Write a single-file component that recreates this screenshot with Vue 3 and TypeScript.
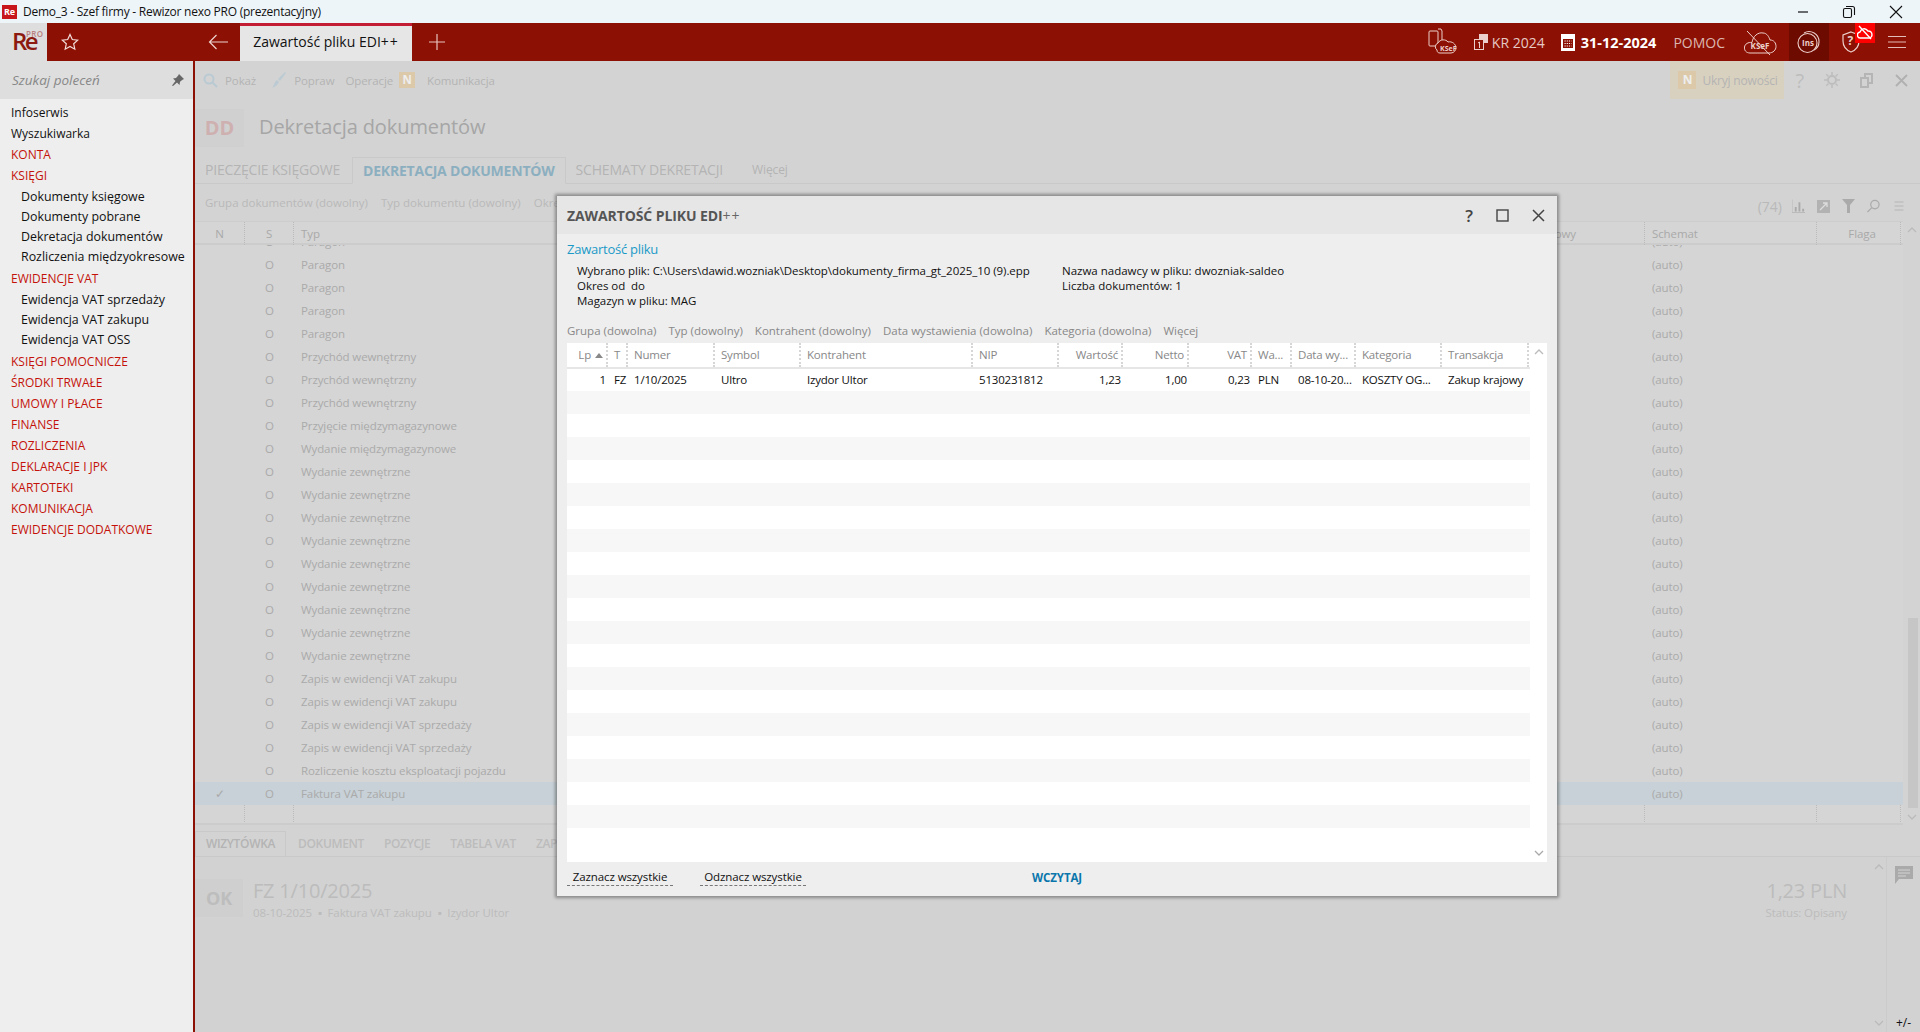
<script setup lang="ts">
interface Item {
  label: string
  kind: 'plain' | 'head' | 'sub'
}

const menu: Item[] = [
  { label: 'Infoserwis', kind: 'plain' },
  { label: 'Wyszukiwarka', kind: 'plain' },
  { label: 'KONTA', kind: 'head' },
  { label: 'KSIĘGI', kind: 'head' },
  { label: 'Dokumenty księgowe', kind: 'sub' },
  { label: 'Dokumenty pobrane', kind: 'sub' },
  { label: 'Dekretacja dokumentów', kind: 'sub' },
  { label: 'Rozliczenia międzyokresowe', kind: 'sub' },
  { label: 'EWIDENCJE VAT', kind: 'head' },
  { label: 'Ewidencja VAT sprzedaży', kind: 'sub' },
  { label: 'Ewidencja VAT zakupu', kind: 'sub' },
  { label: 'Ewidencja VAT OSS', kind: 'sub' },
  { label: 'KSIĘGI POMOCNICZE', kind: 'head' },
  { label: 'ŚRODKI TRWAŁE', kind: 'head' },
  { label: 'UMOWY I PŁACE', kind: 'head' },
  { label: 'FINANSE', kind: 'head' },
  { label: 'ROZLICZENIA', kind: 'head' },
  { label: 'DEKLARACJE I JPK', kind: 'head' },
  { label: 'KARTOTEKI', kind: 'head' },
  { label: 'KOMUNIKACJA', kind: 'head' },
  { label: 'EWIDENCJE DODATKOWE', kind: 'head' },
]

const repeat = (label: string, n: number) => Array.from({ length: n }, () => label)
const docTypes = [
  'Paragon',
  ...repeat('Paragon', 4),
  ...repeat('Przychód wewnętrzny', 3),
  'Przyjęcie międzymagazynowe',
  'Wydanie międzymagazynowe',
  ...repeat('Wydanie zewnętrzne', 9),
  ...repeat('Zapis w ewidencji VAT zakupu', 2),
  ...repeat('Zapis w ewidencji VAT sprzedaży', 2),
  'Rozliczenie kosztu eksploatacji pojazdu',
  'Faktura VAT zakupu',
]

const columns = [
  { label: 'Lp', value: '1', right: true },
  { label: 'T', value: 'FZ' },
  { label: 'Numer', value: '1/10/2025' },
  { label: 'Symbol', value: 'Ultro' },
  { label: 'Kontrahent', value: 'Izydor Ultor' },
  { label: 'NIP', value: '5130231812' },
  { label: 'Wartość', value: '1,23', right: true },
  { label: 'Netto', value: '1,00', right: true },
  { label: 'VAT', value: '0,23', right: true },
  { label: 'Wa...', value: 'PLN' },
  { label: 'Data wy...', value: '08-10-20...' },
  { label: 'Kategoria', value: 'KOSZTY OG...' },
  { label: 'Transakcja', value: 'Zakup krajowy' },
]

const emptyRows = Array.from({ length: 20 }, (_, i) => i)
</script>

<template>
  <div class="app">
    <div class="titlebar">
      <span class="app-icon">Re</span>
      <span class="title-text">Demo_3 - Szef firmy - Rewizor nexo PRO (prezentacyjny)</span>
      <div class="win-controls">
        <svg width="12" height="12" viewBox="0 0 12 12"><path d="M1 6h10" stroke="#111" stroke-width="1.2" /></svg>
        <svg width="14" height="14" viewBox="0 0 14 14" fill="none" stroke="#111" stroke-width="1.1"><rect x="1.5" y="3.5" width="8" height="9" rx="1.5" /><path d="M4 1.5h6.5a2 2 0 0 1 2 2V10" /></svg>
        <svg width="14" height="14" viewBox="0 0 14 14"><path d="M1 1l12 12M13 1L1 13" stroke="#111" stroke-width="1.1" /></svg>
      </div>
    </div>

    <header class="topbar">
      <div class="logo"><span class="logo-re">Re</span><span class="logo-pro">PRO</span></div>
      <svg class="star" width="18" height="18" viewBox="0 0 18 18"><path d="M9 1.5l2.3 5 5.4.6-4 3.7 1.1 5.4L9 13.5l-4.8 2.7 1.1-5.4-4-3.7 5.4-.6z" fill="none" stroke="#f3dedb" stroke-width="1.2" /></svg>
      <svg class="back" width="21" height="16" viewBox="0 0 21 16"><path d="M20 8H1.5M8.5 1L1.5 8l7 7" fill="none" stroke="#eed4d0" stroke-width="1.2" /></svg>
      <div class="doc-tab">Zawartość pliku EDI<span class="pp">++</span></div>
      <svg class="plus" width="16" height="16" viewBox="0 0 16 16"><path d="M8 0v16M0 8h16" stroke="#e8c4bf" stroke-width="1.2" /></svg>

      <div class="top-right">
        <svg class="ksef" width="30" height="30" viewBox="0 0 30 30" fill="none" stroke="#eccfca" stroke-width="1">
          <rect x="1" y="4" width="9" height="15" rx="1" />
          <path d="M10 2h3l1 2v9" />
          <path d="M9 23a4 4 0 0 1 1-7c2-4 8-4 10-1 4-1 8 2 8 6 0 2-2 5-5 5H12c-2 0-3-1-3-3z" fill="#8c1003" />
          <text x="12" y="24" font-size="7" fill="#eccfca" stroke="none" font-weight="700">KSeF</text>
        </svg>
        <svg class="kr-icon" width="14" height="18" viewBox="0 0 14 18" fill="none" stroke="#eccfca"><rect x="5.5" y="1.5" width="8" height="8" fill="#eccfca" /><rect x="0.5" y="6.5" width="9" height="10" fill="#8c1003" /><path d="M4 10l1.500-1v6" /></svg>
        <span class="kr">KR 2024</span>
        <svg class="cal" width="14" height="17" viewBox="0 0 14 17"><rect width="14" height="17" fill="#fff" /><rect x="2" y="5" width="10" height="9" fill="#8c1003" /><path d="M3.500 7h7M3.500 9.500h7M3.500 12h7" stroke="#fff" stroke-dasharray="1.200 1" /></svg>
        <span class="date">31-12-2024</span>
        <span class="pomoc">POMOC</span>
        <svg class="ksef-off" width="33" height="28" viewBox="0 0 33 28" fill="none" stroke="#eccfca" stroke-width="1">
          <path d="M6 25C2 25 0 22 .5 19c.5-3 3.500-5 7.500-4.500C9 8 14 4 19 5c4 0 6 4 7 7 4 0 6 3 6 6.500S29 25 25 25z" />
          <text x="16" y="21" font-size="8" text-anchor="middle" fill="#eccfca" stroke="none" font-weight="700">KSeF</text>
          <path d="M3 3l23 24" />
        </svg>
        <div class="ins">
          <svg width="24" height="24" viewBox="0 0 24 24" fill="none" stroke="#eccfca" stroke-width="1.100"><circle cx="10.500" cy="13" r="9.500" /><path d="M7 3a10 10 0 0 1 15 9 9 9 0 0 1-5 8" /><text x="5" y="16" font-size="8" fill="#eccfca" stroke="none" font-weight="700">Ins</text></svg>
        </div>
        <svg class="shield" width="18" height="22" viewBox="0 0 18 22" fill="none" stroke="#eccfca" stroke-width="1.200"><path d="M9 1l8 3v6c0 5-3 9-8 11-5-2-8-6-8-11V4z" /><text x="5.500" y="14" font-size="12" font-weight="700" fill="#eccfca" stroke="none">?</text></svg>
        <span class="alert">
          <svg width="16" height="16" viewBox="0 0 16 16" fill="none" stroke="#fff" stroke-width="1.400"><path d="M4 13a3 3 0 0 1-1-6c1-3 5-5 8-1 3 0 4 2 4 4s-2 3-3 3z" /><path d="M2 1l12 13" /></svg>
        </span>
        <svg class="burger" width="18" height="12" viewBox="0 0 18 12"><path d="M0 .5h18M0 6h18M0 11.500h18" stroke="#e2bcb6" stroke-width="1.200" /></svg>
      </div>
    </header>

    <div class="workspace">
      <aside class="sidebar">
        <div class="search">
          <span>Szukaj poleceń</span>
          <svg width="12" height="12" viewBox="0 0 12 12"><path d="M7 0l5 5-1.500.8-2.500 2L7.500 11 5 8.500 1 12l-1-.5L3.500 7 1 4.500l3-.5 2.200-2.500z" fill="#666" /></svg>
        </div>
        <nav class="menu">
          <a v-for="m in menu" :key="m.label" :class="['menu-item', m.kind]">{{ m.label }}</a>
        </nav>
      </aside>

      <main class="main">
        <div class="toolbar">
          <svg class="tb-search" width="15" height="15" viewBox="0 0 15 15" fill="none" stroke="#b9cad3" stroke-width="2"><circle cx="6" cy="6" r="4.500" /><path d="M9.500 9.500l4.500 4.500" /></svg>
          <span class="tb-pokaz">Pokaż</span>
          <svg class="tb-brush" width="14" height="16" viewBox="0 0 14 16"><path d="M13 0L6 7l2 2 6-8zM5 8l2 2c-1 3-4 5-7 6 2-2 2-6 5-8z" fill="#bccbd3" /></svg>
          <span class="tb-popraw">Popraw</span>
          <span class="tb-oper">Operacje</span>
          <span class="n-box">N</span>
          <span class="tb-kom">Komunikacja</span>
          <div class="tb-right">
            <div class="news"><span class="n-box big">N</span><span>Ukryj nowości</span></div>
            <span class="tb-q">?</span>
            <svg class="tb-gear" width="16" height="16" viewBox="0 0 16 16" fill="none" stroke="#bdbdbd" stroke-width="2"><circle cx="8" cy="8" r="4" /><path d="M8 0v3M8 13v3M0 8h3M13 8h3M2.300 2.300l2 2M11.700 11.700l2 2M13.700 2.300l-2 2M4.300 11.700l-2 2" stroke-width="1.500" /></svg>
            <svg class="tb-win" width="13" height="15" viewBox="0 0 13 15" fill="none" stroke="#b5b5b5" stroke-width="2"><rect x="1" y="5" width="7" height="9" /><path d="M5 4V1h7v9H9" /></svg>
            <svg class="tb-x" width="13" height="13" viewBox="0 0 13 13"><path d="M1 1l11 11M12 1L1 12" stroke="#b0b0b0" stroke-width="1.800" /></svg>
          </div>
        </div>

        <div class="page-head">
          <span class="dd">DD</span>
          <h1>Dekretacja dokumentów</h1>
        </div>

        <div class="tabs">
          <span class="tab">PIECZĘCIE KSIĘGOWE</span>
          <span class="tab active">DEKRETACJA DOKUMENTÓW</span>
          <span class="tab">SCHEMATY DEKRETACJI</span>
          <span class="tab more">Więcej</span>
        </div>

        <div class="filters">
          <span>Grupa dokumentów (dowolny)</span>
          <span>Typ dokumentu (dowolny)</span>
          <span>Okres</span>
          <div class="grid-tools">
            <span class="count">(74)</span>
            <svg width="13" height="14" viewBox="0 0 14 14"><path d="M0 0v14h14" fill="none" stroke="#b8b8b8" /><path d="M3 8h2v5H3zM7 3h2v10H7zM11 10h2v3h-2z" fill="#aaa" /></svg>
            <svg width="13" height="13" viewBox="0 0 13 13"><rect width="13" height="13" fill="#b2b2b2" /><path d="M3 10l7-7M6 3h4v4" fill="none" stroke="#ddd" stroke-width="1.300" /></svg>
            <svg width="13" height="14" viewBox="0 0 13 14"><path d="M0 0h13L8 6v8H5V6z" fill="#aaa" /></svg>
            <svg width="13" height="14" viewBox="0 0 14 14" fill="none" stroke="#aaa" stroke-width="1.300"><circle cx="8.500" cy="5.500" r="4.500" /><path d="M5 9l-4.500 4.500" /></svg>
            <svg class="t-menu" width="10" height="10" viewBox="0 0 9 10"><path d="M0 1h9M0 5h9M0 9h9" stroke="#b5b5b5" /></svg>
          </div>
        </div>

        <section class="grid">
          <div class="grid-main">
            <div class="g-head g-row">
              <span class="c-n">N</span><span class="c-s">S</span><span class="c-t">Typ</span><span class="c-k">Księgowy</span><span class="c-sch">Schemat</span><span class="c-f">Flaga</span>
            </div>
            <div class="g-body">
              <div
                v-for="(t, i) in docTypes"
                :key="i"
                :class="['g-row', { selected: i === docTypes.length - 1 }]"
              >
                <span class="c-n">{{ i === docTypes.length - 1 ? '✓' : '' }}</span><span class="c-s">O</span><span class="c-t">{{ t }}</span><span class="c-k"></span><span class="c-sch">(auto)</span><span class="c-f"></span>
              </div>
              <div class="g-row blank">
                <span class="c-n"></span><span class="c-s"></span><span class="c-t"></span><span class="c-k"></span><span class="c-sch"></span><span class="c-f"></span>
              </div>
            </div>
          </div>
          <div class="g-scroll">
            <svg width="10" height="6" viewBox="0 0 10 6"><path d="M1 5l4-4 4 4" fill="none" stroke="#bbb" stroke-width="1.300" /></svg>
            <div class="thumb"></div>
            <svg width="10" height="6" viewBox="0 0 10 6"><path d="M1 1l4 4 4-4" fill="none" stroke="#bbb" stroke-width="1.300" /></svg>
          </div>
        </section>

        <div class="lower-tabs">
          <span class="lt active">WIZYTÓWKA</span>
          <span class="lt">DOKUMENT</span>
          <span class="lt">POZYCJE</span>
          <span class="lt">TABELA VAT</span>
          <span class="lt">ZAPISY</span>
        </div>

        <section class="summary">
          <div class="sum-main">
            <span class="ok">OK</span>
            <div class="sum-doc">
              <div class="sum-no">FZ 1/10/2025</div>
              <div class="sum-sub">08-10-2025 &nbsp;▪&nbsp; Faktura VAT zakupu &nbsp;▪&nbsp; Izydor Ultor</div>
            </div>
            <div class="sum-amount">
              <div class="sum-no">1,23 PLN</div>
              <div class="sum-sub">Status: Opisany</div>
            </div>
            <div class="sum-chev">
              <svg width="10" height="6" viewBox="0 0 10 6"><path d="M1 5l4-4 4 4" fill="none" stroke="#bbb" stroke-width="1.300" /></svg>
              <svg width="10" height="6" viewBox="0 0 10 6"><path d="M1 1l4 4 4-4" fill="none" stroke="#bbb" stroke-width="1.300" /></svg>
            </div>
          </div>
          <div class="sum-side">
            <svg width="18" height="18" viewBox="0 0 18 18"><path d="M0 0h18v13H4l-4 5z" fill="#aaa" /><path d="M3 4h12M3 7h12M3 10h8" stroke="#d3d3d3" /></svg>
            <span class="plus-minus">+/-</span>
          </div>
        </section>
      </main>
    </div>

    <div class="modal">
      <div class="m-title">
        <h2>ZAWARTOŚĆ PLIKU EDI<i>++</i></h2>
        <div class="m-actions">
          <span class="m-q">?</span>
          <svg width="13" height="13" viewBox="0 0 13 13"><rect x="1" y="1" width="11" height="11" fill="none" stroke="#444" stroke-width="1.400" /></svg>
          <svg width="13" height="13" viewBox="0 0 13 13"><path d="M1 1l11 11M12 1L1 12" stroke="#444" stroke-width="1.500" /></svg>
        </div>
      </div>
      <div class="m-body">
        <div class="m-caption">Zawartość pliku</div>
        <div class="m-info">
          <div class="m-info-left">
            <div>Wybrano plik: C:\Users\dawid.wozniak\Desktop\dokumenty_firma_gt_2025_10 (9).epp</div>
            <div>Okres od &nbsp;do</div>
            <div>Magazyn w pliku: MAG</div>
          </div>
          <div class="m-info-right">
            <div>Nazwa nadawcy w pliku: dwozniak-saldeo</div>
            <div>Liczba dokumentów: 1</div>
          </div>
        </div>
        <div class="m-filters">
          <span>Grupa (dowolna)</span>
          <span>Typ (dowolny)</span>
          <span>Kontrahent (dowolny)</span>
          <span>Data wystawienia (dowolna)</span>
          <span>Kategoria (dowolna)</span>
          <span>Więcej</span>
        </div>
        <div class="m-table">
          <div class="m-grid">
            <div class="m-row m-head">
              <span v-for="c in columns" :key="c.label" :class="['m-cell', { right: c.right }]">
                {{ c.label }}<svg v-if="c.label === 'Lp'" class="sort" width="8" height="5" viewBox="0 0 8 5"><path d="M4 0l4 5H0z" fill="#888" /></svg>
              </span>
            </div>
            <div class="m-row m-data">
              <span v-for="c in columns" :key="c.label" :class="['m-cell', { right: c.right }]">{{ c.value }}</span>
            </div>
            <div class="m-empty">
              <div v-for="r in emptyRows" :key="r" class="m-blank"></div>
            </div>
          </div>
          <div class="m-scroll">
            <svg width="10" height="6" viewBox="0 0 10 6"><path d="M1 5l4-4 4 4" fill="none" stroke="#bbb" stroke-width="1.300" /></svg>
            <svg width="10" height="6" viewBox="0 0 10 6"><path d="M1 1l4 4 4-4" fill="none" stroke="#aaa" stroke-width="1.300" /></svg>
          </div>
        </div>
        <div class="m-footer">
          <button class="link-btn first">Zaznacz wszystkie</button>
          <button class="link-btn second">Odznacz wszystkie</button>
          <button class="load">WCZYTAJ</button>
        </div>
      </div>
    </div>
  </div>
</template>

<style>
html,
body {
  margin: 0;
  background: #d3d3d3;
  overflow: hidden;
}
</style>

<style scoped>
.app {
  position: relative;
  width: 1920px;
  height: 1032px;
  overflow: hidden;
  font-family: 'Open Sans', 'Noto Sans', sans-serif;
  font-size: 11.5px;
  letter-spacing: -0.1px;
  color: #111;
}

.titlebar {
  height: 23px;
  display: flex;
  align-items: center;
  background: #eef5f9;
}
.app-icon {
  width: 15px;
  height: 14px;
  margin-left: 2px;
  background: #c8161d;
  color: #fff;
  font-size: 9px;
  font-weight: 700;
  line-height: 14px;
  text-align: center;
}
.title-text {
  margin-left: 6px;
  font-size: 12px;
  letter-spacing: -0.25px;
}
.win-controls {
  margin-left: auto;
  display: flex;
  align-items: center;
  gap: 33px;
  padding-right: 17px;
}

.topbar {
  height: 38px;
  display: flex;
  align-items: center;
  background: #8c1003;
  color: #eccfca;
}
.logo {
  position: relative;
  width: 47px;
  height: 38px;
  background: #dedede;
}
.logo-re {
  position: absolute;
  left: 12px;
  top: 1px;
  font-size: 24px;
  font-weight: 600;
  letter-spacing: -2.5px;
  color: #8c1a10;
}
.logo-pro {
  position: absolute;
  left: 26px;
  top: 5px;
  font-size: 8px;
  font-weight: 600;
  letter-spacing: 0.3px;
  color: #b98080;
}
.star {
  margin-left: 14px;
}
.back {
  margin-left: 129px;
}
.doc-tab {
  margin-left: 11px;
  width: 172px;
  height: 35px;
  border-top: 3px solid #c21d33;
  background: #e6e6e6;
  color: #111;
  font-size: 14px;
  letter-spacing: 0;
  line-height: 31px;
  text-align: center;
  align-self: flex-end;
}
.pp {
  letter-spacing: 1px;
}
.plus {
  margin-left: 17px;
}
.top-right {
  margin-left: auto;
  height: 38px;
  display: flex;
  align-items: center;
  position: relative;
  letter-spacing: 0;
}
.ksef {
  margin-right: 16px;
}
.kr-icon {
  margin-right: 4px;
}
.kr {
  font-size: 14px;
  margin-right: 16px;
  color: #e6c9c5;
}
.cal {
  margin-right: 6px;
}
.date {
  font-size: 14.5px;
  font-weight: 700;
  color: #fff;
  margin-right: 17px;
}
.pomoc {
  font-size: 14px;
  color: #dcb6b0;
  margin-right: 19px;
}
.ksef-off {
  margin-right: 12px;
}
.ins {
  width: 40px;
  height: 38px;
  background: #6e0b01;
  display: flex;
  align-items: center;
  justify-content: center;
  margin-right: 13px;
}
.alert {
  position: absolute;
  right: 45px;
  top: 0;
  width: 20px;
  height: 20px;
  background: #fe0000;
  display: flex;
  align-items: center;
  justify-content: center;
}
.burger {
  margin-left: 28px;
  margin-right: 14px;
}

.workspace {
  display: flex;
  height: 971px;
}
.sidebar {
  width: 193px;
  flex: none;
  background: #eeeeee;
  border-right: 2px solid #8c1003;
}
.search {
  height: 38px;
  background: #dedede;
  display: flex;
  align-items: center;
  justify-content: space-between;
  padding: 0 9px 0 12px;
  font-size: 13.5px;
  letter-spacing: 0;
  font-style: italic;
  color: #888;
}
.menu {
  display: flex;
  flex-direction: column;
  padding-top: 4px;
  font-size: 12px;
  letter-spacing: 0;
}
.menu-item {
  height: 21px;
  line-height: 20px;
  padding-left: 11px;
  white-space: nowrap;
}
.menu-item.head {
  color: #c4120a;
}
.menu-item.sub {
  height: 20px;
  line-height: 20px;
  padding-left: 21px;
  font-size: 12.4px;
}
.menu-item.sub:has(+ .head) {
  margin-bottom: 2px;
}

.main {
  flex: 1;
  min-width: 0;
  background: #d3d3d3;
  color: #aaa;
  display: flex;
  flex-direction: column;
}

.toolbar {
  height: 38px;
  display: flex;
  align-items: center;
  padding-left: 8px;
  color: #b4b4b4;
}
.tb-pokaz {
  margin-left: 7px;
}
.tb-brush {
  margin-left: 16px;
}
.tb-popraw {
  margin-left: 8px;
}
.tb-oper {
  margin-left: 11px;
}
.n-box {
  margin-left: 6px;
  width: 16px;
  height: 16px;
  background: #dcc9aa;
  color: #eee;
  font-weight: 700;
  line-height: 16px;
  text-align: center;
}
.n-box.big {
  margin-left: 0;
  width: 18px;
  height: 18px;
  line-height: 18px;
}
.tb-kom {
  margin-left: 12px;
}
.tb-right {
  margin-left: auto;
  display: flex;
  align-items: center;
  height: 38px;
}
.news {
  width: 114px;
  height: 38px;
  box-sizing: border-box;
  background: #d9d1bf;
  display: flex;
  align-items: center;
  gap: 6px;
  padding-left: 8px;
  font-size: 12px;
  letter-spacing: -0.2px;
  white-space: nowrap;
}
.tb-q {
  margin-left: 11px;
  font-size: 20px;
  color: #bdbdbd;
}
.tb-gear {
  margin-left: 20px;
}
.tb-win {
  margin-left: 20px;
}
.tb-x {
  margin-left: 22px;
  margin-right: 12px;
}

.page-head {
  height: 58px;
  display: flex;
  align-items: flex-start;
  padding-top: 10px;
  box-sizing: border-box;
}
.dd {
  width: 49px;
  height: 38px;
  background: #d0d0d0;
  color: #cfb0b0;
  font-size: 20px;
  font-weight: 700;
  line-height: 38px;
  text-align: center;
}
h1 {
  margin: 0 0 0 15px;
  font-size: 20px;
  font-weight: 400;
  line-height: 36px;
  color: #a6a6a6;
}

.tabs {
  height: 27px;
  display: flex;
  align-items: stretch;
  border-bottom: 1px solid #c9c9c9;
  font-size: 14px;
  letter-spacing: -0.2px;
  box-sizing: border-box;
  color: #b4b4b4;
}
.tab {
  padding: 0 10px;
  line-height: 26px;
}
.tab.active {
  margin-left: 2px;
  border: 1px solid #c9c9c9;
  border-bottom: 1px solid #d3d3d3;
  height: 27px;
  box-sizing: border-box;
  color: #8cafc0;
  font-weight: 700;
}
.tab.more {
  font-size: 12px;
  letter-spacing: -0.1px;
  padding-left: 19px;
}

.filters {
  height: 37px;
  display: flex;
  align-items: center;
  gap: 13px;
  padding-left: 10px;
  color: #b9b9b9;
  letter-spacing: 0;
}
.grid-tools {
  margin-left: auto;
  display: flex;
  align-items: center;
  gap: 12px;
  padding: 7px 16px 0 0;
}
.count {
  font-size: 14px;
  margin-right: -2px;
}
.t-menu {
  margin-left: 2px;
}

.grid {
  height: 604px;
  display: flex;
}
.grid-main {
  width: 1708px;
  display: flex;
  flex-direction: column;
  background: #d5d5d5;
  border-bottom: 2px solid #cccccc;
  box-sizing: border-box;
}
.g-row {
  display: grid;
  grid-template-columns: 50px 49px 1226px 125px 172px 84px;
  height: 23px;
  line-height: 23px;
  white-space: nowrap;
}
.g-row > span {
  padding-left: 7px;
}
.g-head {
  border-top: 1px solid #cdcdcd;
  border-bottom: 2px solid #cccccc;
  height: 21px;
  line-height: 23px;
  color: #a9a9a9;
  flex: none;
}
.g-head > span,
.blank > span {
  border-right: 1px dotted #bbb;
}
.g-head .c-n,
.g-body .c-n {
  padding-left: 0;
  text-align: center;
}
.g-head .c-s,
.g-body .c-s {
  padding-left: 0;
  text-align: center;
}
.g-head .c-f {
  text-align: center;
}
.g-body {
  flex: 1;
  overflow: hidden;
}
.g-body .g-row:first-child {
  margin-top: -15px;
}
.g-row.selected {
  background: #c7d1d7;
}
.g-scroll {
  width: 17px;
  display: flex;
  flex-direction: column;
  align-items: center;
  padding: 6px 0 4px;
  box-sizing: border-box;
}
.thumb {
  width: 10px;
  height: 190px;
  margin-top: auto;
  margin-bottom: 6px;
  margin-left: 3px;
  background: #c6c6c6;
}
.g-scroll svg:last-child {
  margin-bottom: 1px;
}

.lower-tabs {
  height: 32px;
  display: flex;
  align-items: flex-end;
  border-bottom: 1px solid #c9c9c9;
  box-sizing: border-box;
  font-size: 12px;
  font-weight: 600;
  letter-spacing: -0.35px;
  color: #bcbcbc;
}
.lt {
  height: 24px;
  line-height: 24px;
  padding: 0 10px;
}
.lt.active {
  border: 1px solid #c9c9c9;
  border-bottom: 0;
  margin-right: 2px;
  color: #b4b4b4;
}

.summary {
  flex: 1;
  display: flex;
  background: #d2d2d2;
  color: #bcbcbc;
}
.sum-main {
  flex: 1;
  display: flex;
  align-items: flex-start;
  padding-top: 22px;
  position: relative;
}
.ok {
  width: 48px;
  height: 38px;
  background: #cfcfcf;
  color: #bdbdbd;
  font-size: 18px;
  font-weight: 700;
  line-height: 38px;
  text-align: center;
}
.sum-doc {
  margin-left: 10px;
}
.sum-no {
  font-size: 20px;
  line-height: 24px;
  letter-spacing: -0.2px;
}
.sum-sub {
  line-height: 20px;
}
.sum-amount {
  margin-left: auto;
  margin-right: 39px;
  text-align: right;
}
.sum-chev {
  position: absolute;
  right: 2px;
  top: 7px;
  bottom: 6px;
  display: flex;
  flex-direction: column;
  justify-content: space-between;
}
.sum-side {
  width: 34px;
  border-left: 1px solid #cbcbcb;
  display: flex;
  flex-direction: column;
  align-items: center;
  padding-top: 9px;
  box-sizing: border-box;
}
.plus-minus {
  margin-top: auto;
  margin-bottom: 1px;
  color: #111;
  font-size: 12px;
}

.modal {
  position: absolute;
  left: 557px;
  top: 196px;
  width: 1000px;
  height: 700px;
  background: #eeeeee;
  box-shadow: 0 0 3px 2px rgba(0, 0, 0, 0.35);
  display: flex;
  flex-direction: column;
}
.m-title {
  height: 38px;
  flex: none;
  background: #e6e6e6;
  display: flex;
  align-items: center;
  padding-left: 10px;
}
h2 {
  margin: 0;
  font-size: 14px;
  font-weight: 700;
  letter-spacing: -0.1px;
  color: #555;
}
h2 i {
  font-style: normal;
  font-weight: 400;
  letter-spacing: 1px;
  color: #666;
}
.m-actions {
  margin-left: auto;
  display: flex;
  align-items: center;
  gap: 23px;
  padding-right: 12px;
  color: #444;
}
.m-q {
  font-size: 17px;
  font-weight: 600;
}
.m-body {
  flex: 1;
  padding: 0 10px;
  display: flex;
  flex-direction: column;
}
.m-caption {
  margin-top: 6px;
  font-size: 13px;
  letter-spacing: -0.25px;
  line-height: 18px;
  color: #1b9ac8;
}
.m-info {
  display: flex;
  margin-top: 5px;
  padding-left: 10px;
  line-height: 15px;
  height: 45px;
  letter-spacing: -0.05px;
}
.m-info-left {
  width: 485px;
  flex: none;
}
.m-info-right {
  letter-spacing: 0;
}
.m-filters {
  margin-top: 15px;
  display: flex;
  gap: 12px;
  line-height: 16px;
  color: #888;
  letter-spacing: 0;
}
.m-table {
  margin-top: 4px;
  height: 519px;
  display: flex;
  background: #fff;
  letter-spacing: -0.2px;
}
.m-grid {
  width: 963px;
  flex: none;
  display: flex;
  flex-direction: column;
}
.m-row {
  display: grid;
  grid-template-columns: 41px 20px 87px 86px 172px 86px 64px 66px 63px 40px 64px 86px 87px;
  white-space: nowrap;
}
.m-cell {
  padding: 0 6px;
  overflow: hidden;
}
.m-cell.right {
  text-align: right;
  padding-right: 3px;
}
.m-head {
  height: 24px;
  line-height: 24px;
  color: #888;
}
.m-head .m-cell {
  border-right: 2px dotted #d6d6d6;
  box-sizing: border-box;
}
.m-head .m-cell.right {
  padding-right: 3px;
}
.m-data {
  height: 24px;
  line-height: 21px;
  border-top: 2px solid #e6e6e6;
  box-sizing: border-box;
}
.m-data .m-cell.right {
  padding-right: 2px;
}
.sort {
  margin-left: 4px;
  vertical-align: 1px;
}
.m-empty {
  flex: 1;
  overflow: hidden;
}
.m-blank {
  height: 23px;
  background: #f7f7f7;
}
.m-blank:nth-child(even) {
  background: #fff;
}
.m-scroll {
  flex: 1;
  display: flex;
  flex-direction: column;
  align-items: center;
  justify-content: space-between;
  padding: 6px 0;
}
.m-footer {
  flex: 1;
  display: flex;
  align-items: flex-start;
  padding-top: 6px;
}
.m-footer button {
  font: inherit;
  letter-spacing: inherit;
  background: none;
  border: 0;
  padding: 0;
  height: 18px;
  color: #111;
}
.link-btn {
  border-bottom: 1px dashed #777 !important;
  width: 106px;
}
.second {
  margin-left: 27px;
}
.load {
  margin-left: 226px;
  font-weight: 700 !important;
  color: #0a76ab !important;
}
</style>
